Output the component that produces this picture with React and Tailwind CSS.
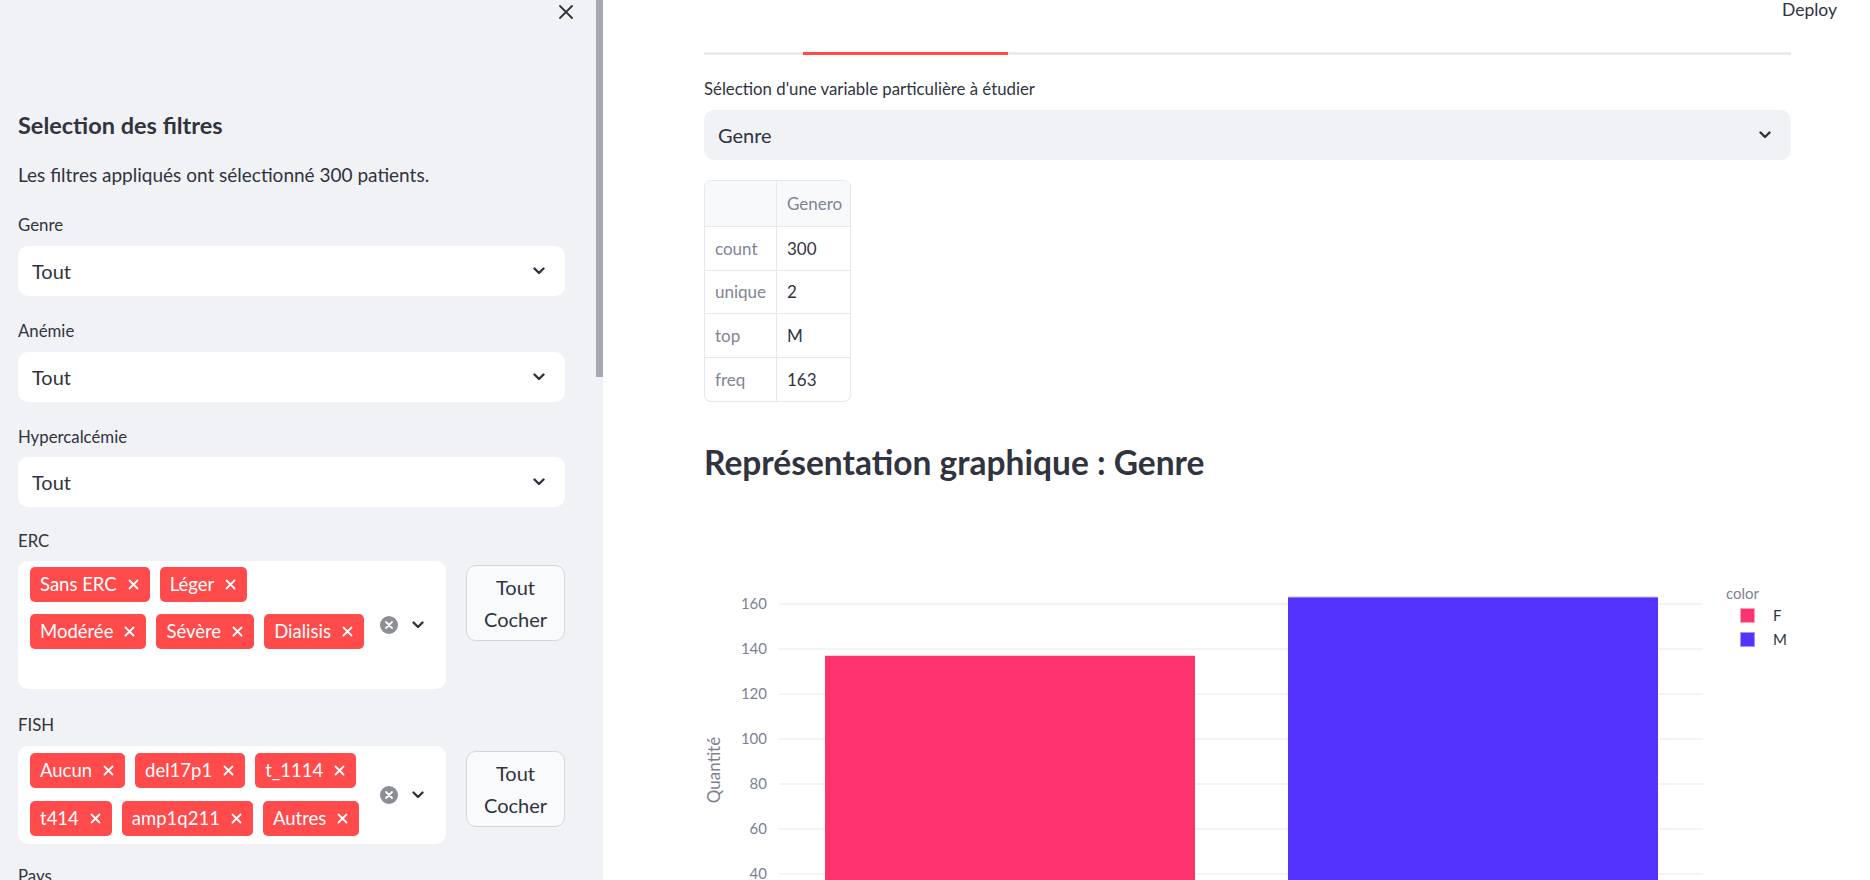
import React from "react";

const ticks = [160, 140, 120, 100, 80, 60, 40];
const yOf = (v) => 373 - (v - 40) * 2.25;

function Chevron() {
  return (
    <svg width="12" height="8" viewBox="0 0 12 8" className="shrink-0">
      <polyline points="1.5,1.5 6,6 10.5,1.5" fill="none" stroke="#31333f" strokeWidth="2.4" strokeLinecap="round" strokeLinejoin="round" />
    </svg>
  );
}

function ClearIcon() {
  return (
    <svg width="18" height="18" viewBox="0 0 18 18" className="shrink-0">
      <circle cx="9" cy="9" r="9" fill="#8b8d97" />
      <path d="M6 6 L12 12 M12 6 L6 12" stroke="#fff" strokeWidth="1.8" strokeLinecap="round" />
    </svg>
  );
}

function Select({ value, className = "bg-white" }) {
  return (
    <div className={`h-[50px] rounded-[10px] flex items-center justify-between pl-[14px] pr-[20px] ${className}`}>
      <span className="text-[20px] text-[#31333f]">{value}</span>
      <Chevron />
    </div>
  );
}

function Tag({ label }) {
  return (
    <div className="h-[35px] bg-[#ff4b4b] rounded-[5px] flex items-center pl-[10px] pr-[11px] gap-[11px] text-white text-[18.5px]">
      <span>{label}</span>
      <svg width="11" height="11" viewBox="0 0 11 11">
        <path d="M1.5 1.5 L9.5 9.5 M9.5 1.5 L1.5 9.5" stroke="#fff" strokeWidth="1.8" strokeLinecap="round" />
      </svg>
    </div>
  );
}

function MultiSelect({ rows, extra, rowGap, pt, pb, btnTop }) {
  return (
    <div className="flex gap-[20px]">
      <div className={`w-[428px] bg-white rounded-[10px] pl-[12px] flex ${pt} ${pb}`}>
        <div className={`w-[344px] flex flex-col ${rowGap}`}>
          {rows.map((r, i) => (
            <div key={i} className="flex gap-[10px]">
              {r.map((t) => (
                <Tag key={t} label={t} />
              ))}
            </div>
          ))}
          {extra && <div className="h-[21px]" />}
        </div>
        <div className="flex items-center gap-[14px] pl-[6px]">
          <ClearIcon />
          <Chevron />
        </div>
      </div>
      <button className={`w-[99px] h-[76px] ${btnTop} border border-[#d5d6db] rounded-[10px] bg-[#f9fafb] flex flex-col items-center justify-center text-[20px] leading-[32px] text-[#31333f]`}>
        <span>Tout</span>
        <span>Cocher</span>
      </button>
    </div>
  );
}

function Label({ children, className = "" }) {
  return <div className={`h-[24px] leading-[24px] text-[16.8px] text-[#31333f] ${className}`}>{children}</div>;
}

function Sidebar() {
  return (
    <aside className="w-[603px] h-[880px] bg-[#f0f2f6] flex shrink-0 overflow-hidden">
      <div className="w-[596px] pl-[18px] pr-[31px]">
        <div className="flex justify-end pt-[5px] -mr-[8px]">
          <svg width="14" height="14" viewBox="0 0 14 14">
            <path d="M1 1 L13 13 M13 1 L1 13" stroke="#31333f" strokeWidth="1.8" strokeLinecap="round" />
          </svg>
        </div>
        <h3 className="mt-[90px] text-[23.5px] leading-[32px] font-bold text-[#31333f]">Selection des filtres</h3>
        <p className="mt-[20px] text-[19px] leading-[28px] text-[#31333f]">Les filtres appliqués ont sélectionné 300 patients.</p>

        <Label className="mt-[24px]">Genre</Label>
        <div className="mt-[9px]"><Select value="Tout" /></div>

        <Label className="mt-[23px]">Anémie</Label>
        <div className="mt-[9px]"><Select value="Tout" /></div>

        <Label className="mt-[23px]">Hypercalcémie</Label>
        <div className="mt-[8px]"><Select value="Tout" /></div>

        <Label className="mt-[22px]">ERC</Label>
        <div className="mt-[8px]">
          <MultiSelect
            rows={[["Sans ERC", "Léger"], ["Modérée", "Sévère", "Dialisis"]]}
            extra
            rowGap="gap-[12px]"
            pt="pt-[6px]"
            pb="pb-[7px]"
            btnTop="mt-[4px]"
          />
        </div>

        <Label className="mt-[24px]">FISH</Label>
        <div className="mt-[9px]">
          <MultiSelect
            rows={[["Aucun", "del17p1", "t_1114"], ["t414", "amp1q211", "Autres"]]}
            rowGap="gap-[13px]"
            pt="pt-[7px]"
            pb="pb-[8px]"
            btnTop="mt-[5px]"
          />
        </div>

        <Label className="mt-[20px]">Pays</Label>
      </div>
      <div className="w-[7px]">
        <div className="h-[377px] bg-[#a8a9b0]" />
      </div>
    </aside>
  );
}

function StatsTable() {
  const rows = [
    ["count", "300"],
    ["unique", "2"],
    ["top", "M"],
    ["freq", "163"],
  ];
  return (
    <div className="w-[147px] border border-[#e6e8ee] rounded-[7px] overflow-hidden text-[17px]">
      <div className="flex h-[46px] bg-[#f8f9fb] border-b border-[#e6e8ee]">
        <div className="w-[72px] border-r border-[#e6e8ee]" />
        <div className="flex-1 flex items-center pl-[10px] text-[#808495]">Genero</div>
      </div>
      {rows.map(([k, v], i) => (
        <div key={k} className={`flex h-[43.5px] ${i < rows.length - 1 ? "border-b border-[#e6e8ee]" : ""}`}>
          <div className="w-[72px] border-r border-[#e6e8ee] flex items-center pl-[10px] text-[#808495]">{k}</div>
          <div className="flex-1 flex items-center pl-[10px] text-[#31333f]">{v}</div>
        </div>
      ))}
    </div>
  );
}

function Chart() {
  return (
    <svg width="1087" height="380" viewBox="0 0 1087 380" className="block">
      {ticks.map((t) => (
        <g key={t}>
          <line x1="75" x2="999" y1={yOf(t)} y2={yOf(t)} stroke="#e6e9ef" strokeWidth="1.2" />
          <text x="63" y={yOf(t)} dy="5" textAnchor="end" fontSize="15" fill="#7d8191" fontFamily="Lato, sans-serif">
            {t}
          </text>
        </g>
      ))}
      <rect x="121" y={yOf(137)} width="370" height={380 - yOf(137)} fill="#ff346f" />
      <rect x="584" y={yOf(163)} width="370" height={380 - yOf(163)} fill="#5533ff" />
      <line x1="584" x2="954" y1={yOf(163)} y2={yOf(163)} stroke="#8f7dff" strokeWidth="1" />
      <text
        x="12"
        y="269"
        transform="rotate(-90 12 269)"
        textAnchor="middle"
        dominantBaseline="middle"
        fontSize="17"
        fill="#7d8191"
        fontFamily="Lato, sans-serif"
      >
        Quantité
      </text>
      <text x="1022" y="93" dy="5" fontSize="15" fill="#7d8191" fontFamily="Lato, sans-serif">
        color
      </text>
      <rect x="1036.5" y="107.5" width="14" height="14" fill="#ff346f" stroke="#ff9fbb" strokeWidth="1" />
      <text x="1069" y="115" dy="5" fontSize="15" fill="#31333f" fontFamily="Lato, sans-serif">
        F
      </text>
      <rect x="1036.5" y="131.5" width="14" height="14" fill="#5533ff" stroke="#a596ff" strokeWidth="1" />
      <text x="1069" y="139" dy="5" fontSize="15" fill="#31333f" fontFamily="Lato, sans-serif">
        M
      </text>
    </svg>
  );
}

export default function App() {
  return (
    <div className="w-[1870px] h-[880px] flex overflow-hidden bg-white font-[Lato,'Noto_Sans',sans-serif] text-[#31333f]">
      <Sidebar />
      <main className="flex-1 min-w-0">
        <div className="h-[20px] flex justify-end items-center pr-[33px]">
          <span className="text-[17.5px] leading-[20px] text-[#31333f]">Deploy</span>
        </div>
        <div className="pl-[101px] w-[1188px]">
          <div className="mt-[32px] h-[3px] bg-[#ebebed] flex">
            <div className="ml-[99px] w-[205px] bg-[#ff4b4b]" />
          </div>
          <div className="mt-[22px] h-[24px] leading-[24px] text-[16.8px]">Sélection d'une variable particulière à étudier</div>
          <div className="mt-[9px]">
            <Select value="Genre" className="bg-[#f0f2f6]" />
          </div>
          <div className="mt-[20px]">
            <StatsTable />
          </div>
          <h2 className="mt-[36px] h-[48px] leading-[48px] text-[33.5px] font-bold text-[#31333f]">
            Représentation graphique : Genre
          </h2>
          <div className="mt-[15px]">
            <Chart />
          </div>
        </div>
      </main>
    </div>
  );
}
